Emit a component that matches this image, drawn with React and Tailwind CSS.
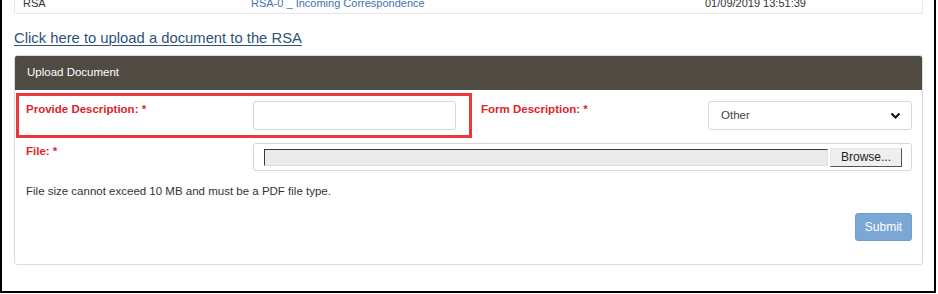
import React from "react";

export default function App() {
  return (
    <div className="w-[938px] h-[294px] bg-white" style={{ fontFamily: '"Liberation Sans", Arial, sans-serif' }}>
      <div className="relative w-[936px] h-[293px] border-x-2 border-b-2 border-black pl-[12px] pr-[11px]">
        {/* top table remnant */}
        <div className="h-[14px] overflow-hidden border-x border-b border-[#e6e6e6] rounded-b-[2px]">
          <div className="flex -mt-[5px] leading-[16px] text-[11px] text-[#333]">
            <div className="w-[236px] pl-[8px]">RSA</div>
            <div className="w-[454px] text-[#3f72ad]">RSA-0 _ Incoming Correspondence</div>
            <div>01/09/2019 13:51:39</div>
          </div>
        </div>

        <div className="mt-[15px] leading-[19px] text-[14.8px]">
          <a className="text-[#2f5279] underline underline-offset-2 decoration-1">Click here to upload a document to the RSA</a>
        </div>

        {/* panel */}
        <div className="mt-[7px] rounded-[3px] border border-[#dcdcdc] overflow-hidden">
          <div className="h-[34px] bg-[#4f4b43] flex items-center pl-[12px] text-[11.5px] text-white">
            Upload Document
          </div>
          <div className="relative pl-[11px] pr-[10px] pt-[11px] pb-[23px] text-[11.5px]">
            {/* annotation highlight */}
            <div className="absolute left-[1px] top-[3px] w-[456px] h-[45px] border-[3px] border-[#e8383d]" />

            <div className="grid grid-cols-[227px_203px_25px_227px_1fr] items-start">
              <div className="leading-[16px] font-bold text-[#e0232b]">Provide Description: *</div>
              <div className="h-[29px] rounded-[3px] border border-[#d6d6d6] bg-white" />
              <div />
              <div className="leading-[16px] font-bold text-[#e0232b]">Form Description: *</div>
              <div className="h-[29px] rounded-[3px] border border-[#d6d6d6] bg-white flex items-center justify-between pl-[12px] pr-[10px] text-[#444]">
                <span>Other</span>
                <svg width="11" height="8" viewBox="0 0 11 8">
                  <path d="M1.5 1.5 L5.5 5.5 L9.5 1.5" fill="none" stroke="#111" strokeWidth="2" />
                </svg>
              </div>
            </div>

            <div className="mt-[13px] grid grid-cols-[227px_1fr] items-start">
              <div className="leading-[16px] font-bold text-[#e0232b]">File: *</div>
              <div className="h-[28px] rounded-[3px] border border-[#d6d6d6] bg-white flex items-center pl-[10px] pr-[9px] gap-[2px]">
                <div className="flex-1 h-[17px] bg-[#ebebeb] border-t-[1.5px] border-l-[1.5px] border-[#3a3a3a] border-b border-r border-b-[#e0e0e0] border-r-[#e0e0e0]" />
                <div className="w-[72px] h-[19px] bg-[#efefef] border border-t-[#e8e8e8] border-l-[#e8e8e8] border-b-[#555] border-r-[#555] flex items-center justify-center text-[12px] text-[#222]">
                  Browse...
                </div>
              </div>
            </div>

            <div className="mt-[12px] leading-[16px] text-[#333]">
              File size cannot exceed 10 MB and must be a PDF file type.
            </div>

            <div className="mt-[14px] flex justify-end">
              <div className="w-[57px] h-[28px] rounded-[3px] bg-[#7aa7d6] border border-[#6f9dcf] flex items-center justify-center text-white text-[12px]">
                Submit
              </div>
            </div>
          </div>
        </div>
      </div>
    </div>
  );
}
